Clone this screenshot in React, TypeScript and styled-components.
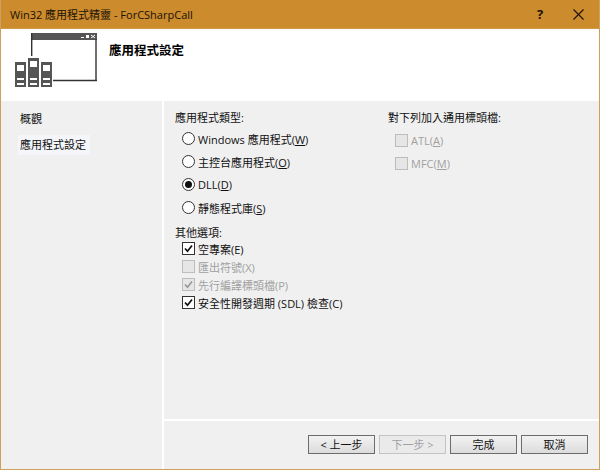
import React from 'react'
import styled, { createGlobalStyle } from 'styled-components'

const GlobalStyle = createGlobalStyle`
  html, body { margin: 0; padding: 0; background: #f0f0f0; }
  body { font-family: "Open Sans", "Noto Sans CJK TC", sans-serif; font-size: 11px; color: #111; }
`

const Win = styled.div`
  width: 600px;
  height: 470px;
  box-sizing: border-box;
  border: 1px solid #cf9f5e;
  border-top: none;
  display: flex;
  flex-direction: column;
  overflow: hidden;
`

const TitleBar = styled.div`
  height: 29px;
  flex: none;
  margin: 0 -1px;
  padding: 0 0 0 10px;
  background: #cc8b2d;
  border-bottom: 1px solid #d39a45;
  box-sizing: border-box;
  display: flex;
  align-items: center;
  color: #1a1206;
`

const TitleText = styled.div`
  flex: 1;
`

const TitleBtn = styled.div`
  width: 38px;
  height: 28px;
  display: flex;
  align-items: center;
  justify-content: center;
  font-weight: 700;
  font-size: 13px;
  &:last-child { margin-right: 3px; }
`

const Header = styled.div`
  height: 72px;
  flex: none;
  background: #fff;
  display: flex;
  align-items: flex-start;
  padding: 3px 0 0 14px;
  box-sizing: border-box;
`

const HeaderTitle = styled.div`
  margin: 8px 0 0 10px;
  font-weight: 700;
  font-size: 12.5px;
  color: #000;
`

const Body = styled.div`
  flex: 1;
  display: flex;
  min-height: 0;
`

const Sidebar = styled.div`
  width: 144px;
  flex: none;
  background: #f0f0f0;
  border-right: 2px solid #fff;
  padding: 8px 0 0 17px;
`

const NavItem = styled.div<{ $active?: boolean }>`
  width: 70px;
  height: 20px;
  line-height: 20px;
  padding-left: 2px;
  margin-bottom: 6px;
  background: ${p => (p.$active ? '#f4f6fa' : 'transparent')};
`

const Main = styled.div`
  flex: 1;
  display: flex;
  flex-direction: column;
  min-width: 0;
`

const Content = styled.div`
  flex: 1;
  display: flex;
  background: #f0f0f0;
  border-bottom: 2px solid #fff;
  padding: 8px 0 0 11px;
`

const LeftCol = styled.div`
  width: 213px;
  flex: none;
`

const RightCol = styled.div`
  flex: 1;
`

const Label = styled.div`
  height: 17px;
  line-height: 17px;
`

const RadioList = styled.div`
  margin-top: 4px;
  margin-bottom: 8px;
  padding-left: 7px;
  display: flex;
  flex-direction: column;
  gap: 6px;
`

const CheckList = styled.div<{ $inset?: boolean }>`
  margin-top: ${p => (p.$inset ? '6px' : '-1px')};
  padding-left: 7px;
  display: flex;
  flex-direction: column;
  gap: ${p => (p.$inset ? '6px' : '1px')};
`

const Row = styled.div<{ $disabled?: boolean }>`
  height: 17px;
  display: flex;
  align-items: center;
  gap: 3px;
  color: ${p => (p.$disabled ? '#a0a0a0' : '#111')};
  white-space: nowrap;
`

const RadioCircle = styled.span<{ $on?: boolean }>`
  width: 13px;
  height: 13px;
  flex: none;
  box-sizing: border-box;
  border: 1px solid #333;
  border-radius: 50%;
  background: #fff;
  display: flex;
  align-items: center;
  justify-content: center;
  &::after {
    content: '';
    display: ${p => (p.$on ? 'block' : 'none')};
    width: 7px;
    height: 7px;
    border-radius: 50%;
    background: #111;
  }
`

const CheckBox = styled.span<{ $disabled?: boolean }>`
  width: 13px;
  height: 13px;
  flex: none;
  box-sizing: border-box;
  border: 1px solid ${p => (p.$disabled ? '#bdbdbd' : '#333')};
  background: ${p => (p.$disabled ? '#e6e6e6' : '#fff')};
  display: flex;
  align-items: center;
  justify-content: center;
`

const Key = styled.span`
  text-decoration: underline;
`

const Footer = styled.div`
  height: 48px;
  flex: none;
  background: #f0f0f0;
  display: flex;
  justify-content: flex-end;
  gap: 4px;
  padding: 14px 11px 0 0;
  box-sizing: border-box;
`

const Btn = styled.div<{ $disabled?: boolean }>`
  width: 67px;
  height: 19px;
  box-sizing: border-box;
  padding-bottom: 2px;
  border: 1px solid ${p => (p.$disabled ? '#c4c4c4' : '#6c6c6c')};
  background: ${p => (p.$disabled ? '#eaeaea' : 'linear-gradient(#f2f2f2, #dcdcdc)')};
  color: ${p => (p.$disabled ? '#a0a0a0' : '#111')};
  display: flex;
  align-items: center;
  justify-content: center;
`

const WizardIcon = () => (
  <svg width="84" height="60" viewBox="0 0 84 60">
    <rect x="16" y="1" width="65" height="48" fill="#fff" />
    <rect x="16" y="1" width="66" height="7" fill="#555" />
    <path d="M16.7 1v23" stroke="#333" strokeWidth="1.4" fill="none" />
    <path d="M81 7v42.3M38 48.5h44" stroke="#333" strokeWidth="1.4" fill="none" />
    <rect x="66" y="5" width="3" height="1" fill="#fff" />
    <rect x="71" y="3" width="3" height="3" fill="#fff" />
    <path d="M76 3l4 3M80 3l-4 3" stroke="#fff" strokeWidth="1" />
    <rect x="0" y="30" width="11" height="25" fill="#555" />
    <rect x="13" y="26" width="11" height="29" fill="#555" />
    <rect x="26" y="30" width="11" height="25" fill="#555" />
    <rect x="2" y="33" width="7" height="6" fill="#fff" />
    <rect x="15" y="29" width="7" height="6" fill="#fff" />
    <rect x="28" y="33" width="7" height="6" fill="#fff" />
    <rect x="2" y="46" width="7" height="2" fill="#fff" />
    <rect x="2" y="51" width="7" height="2" fill="#fff" />
    <rect x="15" y="46" width="7" height="2" fill="#fff" />
    <rect x="15" y="51" width="7" height="2" fill="#fff" />
    <rect x="28" y="46" width="7" height="2" fill="#fff" />
    <rect x="28" y="51" width="7" height="2" fill="#fff" />
  </svg>
)

const Tick = ({ color = '#111' }: { color?: string }) => (
  <svg width="11" height="11" viewBox="0 0 11 11">
    <path d="M2 5.5l2.5 2.7L9 2.5" stroke={color} strokeWidth="1.7" fill="none" />
  </svg>
)

const CloseIcon = () => (
  <svg width="11" height="11" viewBox="0 0 11 11">
    <path d="M0.5 0.5l10 10M10.5 0.5l-10 10" stroke="#1a1206" strokeWidth="1.1" fill="none" />
  </svg>
)

export default function App() {
  return (
    <>
      <GlobalStyle />
      <Win>
        <TitleBar>
          <TitleText>Win32 應用程式精靈 - ForCSharpCall</TitleText>
          <TitleBtn>?</TitleBtn>
          <TitleBtn><CloseIcon /></TitleBtn>
        </TitleBar>
        <Header>
          <WizardIcon />
          <HeaderTitle>應用程式設定</HeaderTitle>
        </Header>
        <Body>
          <Sidebar>
            <NavItem>概觀</NavItem>
            <NavItem $active>應用程式設定</NavItem>
          </Sidebar>
          <Main>
            <Content>
              <LeftCol>
                <Label>應用程式類型:</Label>
                <RadioList>
                  <Row><RadioCircle /><span>Windows 應用程式(<Key>W</Key>)</span></Row>
                  <Row><RadioCircle /><span>主控台應用程式(<Key>O</Key>)</span></Row>
                  <Row><RadioCircle $on /><span>DLL(<Key>D</Key>)</span></Row>
                  <Row><RadioCircle /><span>靜態程式庫(<Key>S</Key>)</span></Row>
                </RadioList>
                <Label>其他選項:</Label>
                <CheckList>
                  <Row><CheckBox><Tick /></CheckBox><span>空專案(E)</span></Row>
                  <Row $disabled><CheckBox $disabled /><span>匯出符號(X)</span></Row>
                  <Row $disabled><CheckBox $disabled><Tick color="#999" /></CheckBox><span>先行編譯標頭檔(P)</span></Row>
                  <Row><CheckBox><Tick /></CheckBox><span>安全性開發週期 (SDL) 檢查(C)</span></Row>
                </CheckList>
              </LeftCol>
              <RightCol>
                <Label>對下列加入通用標頭檔:</Label>
                <CheckList $inset>
                  <Row $disabled><CheckBox $disabled /><span>ATL(<Key>A</Key>)</span></Row>
                  <Row $disabled><CheckBox $disabled /><span>MFC(<Key>M</Key>)</span></Row>
                </CheckList>
              </RightCol>
            </Content>
            <Footer>
              <Btn>&lt; 上一步</Btn>
              <Btn $disabled>下一步 &gt;</Btn>
              <Btn>完成</Btn>
              <Btn>取消</Btn>
            </Footer>
          </Main>
        </Body>
      </Win>
    </>
  )
}
